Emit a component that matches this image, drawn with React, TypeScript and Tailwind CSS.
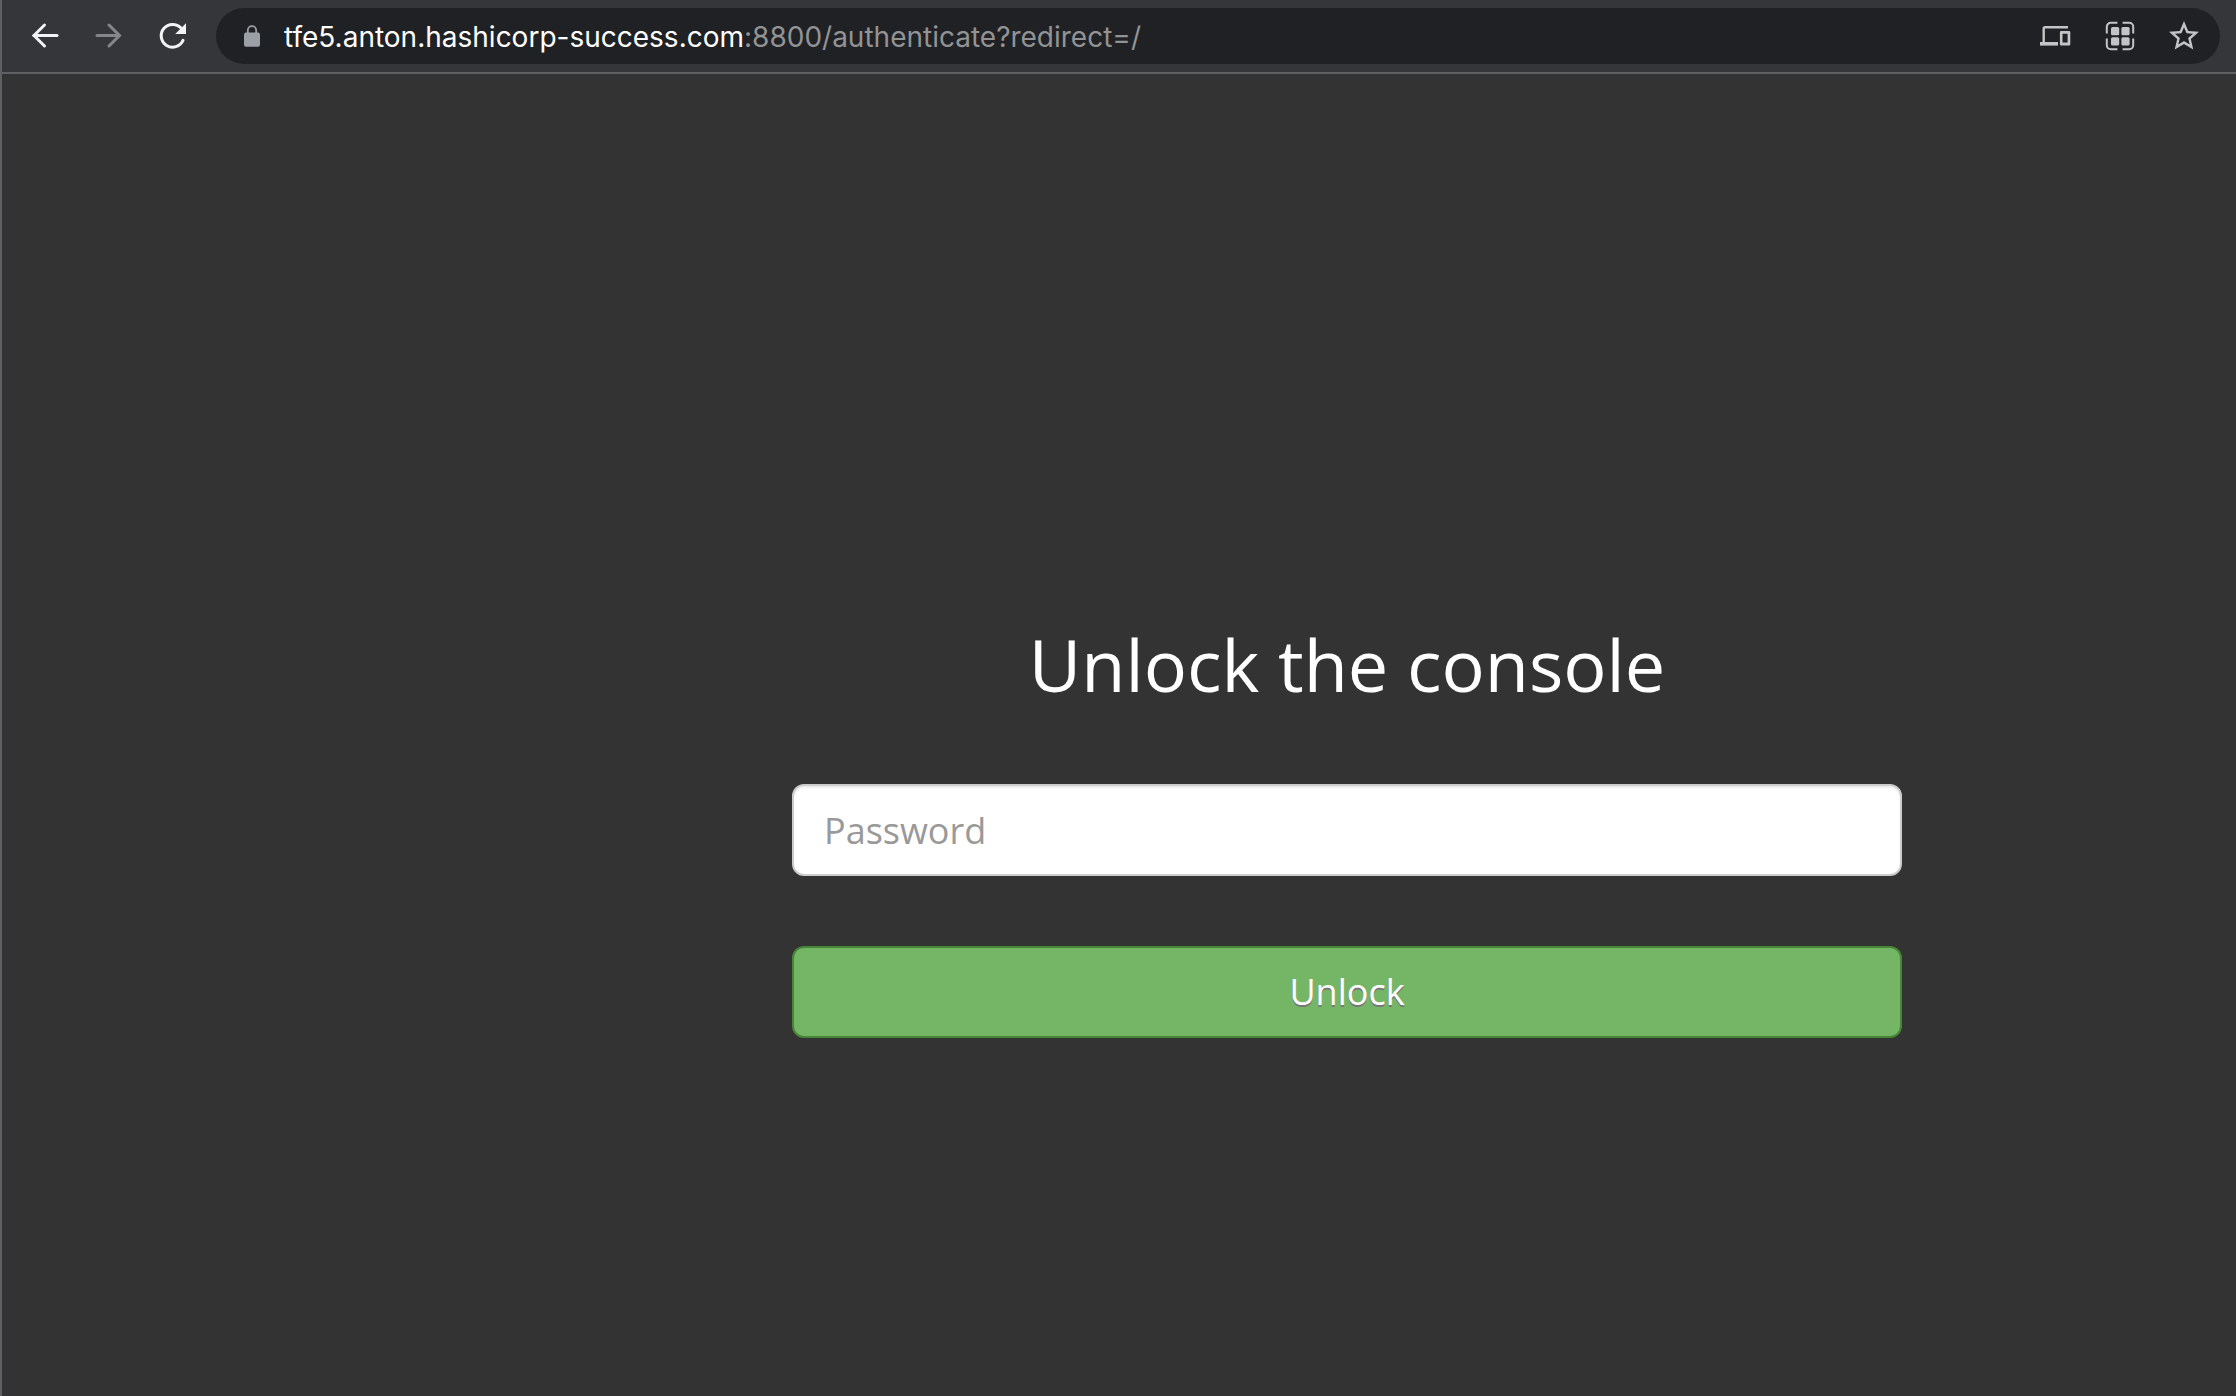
import React from "react";

function BackIcon() {
  return (
    <svg viewBox="0 0 32 32" className="size-8" fill="none" stroke="currentColor" strokeWidth="3" strokeLinecap="round" aria-hidden="true">
      <path d="M16.5 5 L6 15.5 L16.5 26" strokeLinejoin="miter" />
      <path d="M6 15.5 H29" />
    </svg>
  );
}

function ForwardIcon() {
  return (
    <svg viewBox="0 0 32 32" className="size-8" fill="none" stroke="currentColor" strokeWidth="3" strokeLinecap="round" aria-hidden="true">
      <path d="M17 5 L27.5 15.5 L17 26" strokeLinejoin="miter" />
      <path d="M27 15.5 H5" />
    </svg>
  );
}

function ReloadIcon() {
  return (
    <svg viewBox="0 0 32 32" className="size-8" aria-hidden="true">
      <path d="M25 8.1 A11.4 11.4 0 1 0 27 20.4" fill="none" stroke="currentColor" strokeWidth="3" strokeLinecap="round" />
      <path d="M30 3.2 V14 H19.2 Z" fill="currentColor" />
    </svg>
  );
}

function LockIcon() {
  return (
    <svg viewBox="0 0 16 22" className="h-[22px] w-4" aria-hidden="true">
      <rect x="0" y="7.4" width="16" height="14.4" rx="2" fill="currentColor" />
      <path d="M3.8 8 V5.4 a4.2 4.2 0 0 1 8.4 0 V8" fill="none" stroke="currentColor" strokeWidth="1.8" />
    </svg>
  );
}

function DevicesIcon() {
  return (
    <svg viewBox="0 0 32 32" className="size-8" aria-hidden="true">
      <path d="M28 7.3 H5 a1.3 1.3 0 0 0 -1.3 1.3 V24" fill="none" stroke="currentColor" strokeWidth="2.4" />
      <path d="M0 22 H18 V25.6 H0 Z" fill="currentColor" />
      <path fillRule="evenodd" fill="currentColor" d="M21.2 11 H29 a1.3 1.3 0 0 1 1.3 1.3 V24.3 a1.3 1.3 0 0 1 -1.3 1.3 H21.2 a1.3 1.3 0 0 1 -1.3 -1.3 V12.3 a1.3 1.3 0 0 1 1.3 -1.3 Z M22.5 13.8 V22.6 H27.6 V13.8 Z" />
    </svg>
  );
}

function QrIcon() {
  return (
    <svg viewBox="0 0 32 32" className="size-8" aria-hidden="true">
      <path
        d="M2.8 13.4 V6.8 a4 4 0 0 1 4 -4 H13.4 M18.6 2.8 H25.2 a4 4 0 0 1 4 4 V13.4 M29.2 18.6 V25.2 a4 4 0 0 1 -4 4 H18.6 M13.4 29.2 H6.8 a4 4 0 0 1 -4 -4 V18.6"
        fill="none"
        stroke="currentColor"
        strokeWidth="2"
      />
      <g fill="currentColor">
        <rect x="7" y="7" width="8.2" height="8.2" rx="1.5" />
        <rect x="17.4" y="7" width="8.2" height="8.2" rx="1.5" />
        <rect x="7" y="17.2" width="8.2" height="8.2" rx="1.5" />
        <rect x="17.4" y="17.2" width="8.2" height="8.2" rx="1.5" />
      </g>
    </svg>
  );
}

function StarIcon() {
  return (
    <svg viewBox="0 0 24 24" className="size-9" fill="currentColor" aria-hidden="true">
      <path d="M22 9.24l-7.19-.62L12 2 9.19 8.63 2 9.24l5.46 4.73L5.82 21 12 17.27 18.18 21l-1.63-7.03L22 9.24zM12 15.4l-3.76 2.27 1-4.28-3.32-2.88 4.38-.38L12 6.1l1.71 4.04 4.38.38-3.32 2.88 1 4.28L12 15.4z" />
    </svg>
  );
}

function IconButton({ label, className, children }: { label: string; className?: string; children: React.ReactNode }) {
  return (
    <button type="button" aria-label={label} className={className}>
      {children}
    </button>
  );
}

function Toolbar() {
  return (
    <header className="flex h-[74px] items-center border-b-2 border-[#5f6063] bg-[#35363a] pr-4 pl-[26px]">
      <nav className="flex items-center gap-8" aria-label="History">
        <IconButton label="Back" className="text-[#f1f3f4]"><BackIcon /></IconButton>
        <IconButton label="Forward" className="text-[#868689]"><ForwardIcon /></IconButton>
        <IconButton label="Reload" className="text-[#f1f3f4]"><ReloadIcon /></IconButton>
      </nav>
      <div className="ml-7 flex h-14 min-w-0 flex-1 items-center rounded-full bg-[#202124] pr-[18px] pl-7">
        <span className="text-[#9aa0a6]"><LockIcon /></span>
        <div
          role="textbox"
          aria-label="Address"
          className="ml-6 min-w-0 flex-1 truncate pt-0.5 font-['Inter','Liberation_Sans',sans-serif] text-[28px] leading-9 text-[#929395]"
        >
          <span className="text-white">tfe5.anton.hashicorp-success.com</span>:8800/authenticate?redirect=/
        </div>
        <div className="flex items-center gap-8 text-[#c3c4c5]">
          <IconButton label="Send to your devices"><DevicesIcon /></IconButton>
          <IconButton label="Create QR code"><QrIcon /></IconButton>
          <IconButton label="Bookmark this page" className="-ml-0.5"><StarIcon /></IconButton>
        </div>
      </div>
    </header>
  );
}

export default function App() {
  return (
    <div className="flex min-h-screen flex-col border-l-2 border-[#5f6063] bg-[#333333] font-['Open_Sans','Noto_Sans',sans-serif]">
      <Toolbar />
      <main className="grid flex-1 grid-cols-[790fr_1110fr_334fr] content-start pt-[540px]">
        <form className="col-start-2 flex flex-col" onSubmit={(e) => e.preventDefault()}>
          <h1 className="text-center text-[72px] leading-[100px] text-white">Unlock the console</h1>
          <input
            type="password"
            aria-label="Password"
            placeholder="Password"
            className="mt-[70px] h-[92px] rounded-xl border-2 border-[#cccccc] bg-white px-[30px] text-[36px] text-[#555555] shadow-[inset_0_2px_2px_rgba(0,0,0,0.075)] outline-none placeholder:text-[#999999]"
          />
          <button
            type="submit"
            className="mt-[70px] h-[92px] rounded-xl border-2 border-[#468636] bg-[#75b666] text-[36px] text-white [text-shadow:0_2px_0_#777777]"
          >
            Unlock
          </button>
        </form>
      </main>
    </div>
  );
}
